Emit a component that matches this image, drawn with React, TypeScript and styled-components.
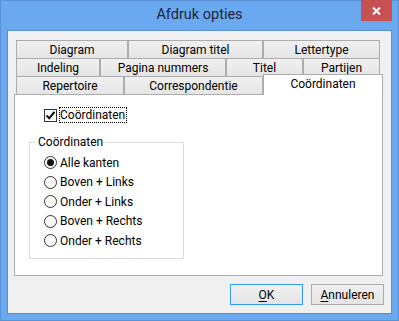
import React from 'react';
import styled, { createGlobalStyle } from 'styled-components';

const GlobalStyle = createGlobalStyle`
  html, body {
    margin: 0;
    padding: 0;
    background: #ffffff;
  }
  * {
    box-sizing: border-box;
  }
`;

const Window = styled.div`
  width: 399px;
  height: 321px;
  background: #6aa9ef;
  border: 1px solid #5b92d6;
  padding: 0 6px 6px 6px;
  display: flex;
  flex-direction: column;
  font-family: Roboto, "Liberation Sans", sans-serif;
  font-size: 12px;
  color: #000;
`;

const TitleBar = styled.div`
  height: 29px;
  display: grid;
  grid-template-columns: 1fr auto 1fr;
  align-items: start;
`;

const Title = styled.div`
  grid-column: 2;
  font-size: 14.5px;
  line-height: 28px;
  color: #22233a;
`;

const CloseButton = styled.div`
  grid-column: 3;
  justify-self: end;
  margin-top: -1px;
  width: 31px;
  height: 21px;
  background: #c75050;
  display: flex;
  align-items: center;
  justify-content: center;
`;

const Client = styled.div`
  flex: 1;
  background: #f0f0f0;
  border: 1px solid #5a8fcf;
  padding: 9px 7px 8px 6px;
  display: flex;
  flex-direction: column;
`;

const TabControl = styled.div`
  margin-right: 1px;
  display: flex;
  flex-direction: column;
`;

const TabRow = styled.div`
  display: flex;
  padding-left: 2px;
  height: 18px;
  position: relative;
`;

const Tab = styled.div<{ $w: number }>`
  width: ${(p) => p.$w}px;
  height: 18px;
  border: 1px solid #acacac;
  border-bottom: none;
  background: linear-gradient(#f0f0f0, #e5e5e5);
  display: flex;
  align-items: center;
  justify-content: center;
  line-height: 16px;
  white-space: nowrap;
`;

const ActiveTab = styled.div<{ $w: number }>`
  width: ${(p) => p.$w}px;
  height: 21px;
  margin-top: -2px;
  border: 1px solid #acacac;
  border-bottom: none;
  background: #ffffff;
  position: relative;
  z-index: 1;
  display: flex;
  justify-content: center;
  padding-top: 1px;
  line-height: 16px;
  white-space: nowrap;
`;

const Panel = styled.div`
  height: 182px;
  background: #ffffff;
  border: 1px solid #adadad;
  padding: 12px 0 0 14px;
  display: flex;
  flex-direction: column;
`;

const CheckRow = styled.div`
  display: flex;
  align-items: center;
  height: 16px;
  margin-left: 15px;
  gap: 2px;
`;

const CheckBox = styled.div`
  width: 13px;
  height: 13px;
  border: 1px solid #333333;
  background: #ffffff;
  display: flex;
  align-items: center;
  justify-content: center;
`;

const FocusLabel = styled.span`
  border: 1px dotted #000;
  padding: 0 1px 0 0;
  line-height: 14px;
  height: 16px;
`;

const GroupBox = styled.fieldset`
  margin: 11px 0 0 0;
  width: 155px;
  height: 125px;
  border: 1px solid #dcdcdc;
  padding: 3px 0 0 14px;
  min-width: 0;
`;

const Legend = styled.legend`
  margin-left: -8px;
  padding: 0 2px;
  line-height: 16px;
`;

const RadioRow = styled.div`
  display: flex;
  align-items: center;
  height: 19.5px;
  gap: 3px;
`;

const Radio = styled.div<{ $on?: boolean }>`
  width: 13px;
  height: 13px;
  border-radius: 50%;
  border: 1px solid #333333;
  background: #ffffff;
  display: flex;
  align-items: center;
  justify-content: center;

  &::after {
    content: '';
    display: ${(p) => (p.$on ? 'block' : 'none')};
    width: 7px;
    height: 7px;
    border-radius: 50%;
    background: #111111;
  }
`;

const Footer = styled.div`
  margin-top: 8px;
  display: flex;
  justify-content: flex-end;
  gap: 8px;
`;

const Button = styled.div<{ $default?: boolean }>`
  width: 73px;
  height: 21px;
  border: 1px solid ${(p) => (p.$default ? '#3399ff' : '#acacac')};
  background: linear-gradient(#f0f0f0, #e5e5e5);
  display: flex;
  align-items: center;
  justify-content: center;
  line-height: 16px;

  u {
    text-decoration: underline;
    text-underline-offset: 2px;
  }
`;

const radios = ['Alle kanten', 'Boven + Links', 'Onder + Links', 'Boven + Rechts', 'Onder + Rechts'];

export default function App() {
  return (
    <>
      <GlobalStyle />
      <Window>
        <TitleBar>
          <Title>Afdruk opties</Title>
          <CloseButton>
            <svg width="9" height="8" viewBox="0 0 9 8">
              <path d="M1 0.5 L8 7.5 M8 0.5 L1 7.5" stroke="#fff" strokeWidth="2" />
            </svg>
          </CloseButton>
        </TitleBar>
        <Client>
          <TabControl>
            <TabRow>
              <Tab $w={112}>Diagram</Tab>
              <Tab $w={135}>Diagram titel</Tab>
              <Tab $w={117}>Lettertype</Tab>
            </TabRow>
            <TabRow>
              <Tab $w={84}>Indeling</Tab>
              <Tab $w={126}>Pagina nummers</Tab>
              <Tab $w={77}>Titel</Tab>
              <Tab $w={77}>Partijen</Tab>
            </TabRow>
            <TabRow>
              <Tab $w={108}>Repertoire</Tab>
              <Tab $w={139}>Correspondentie</Tab>
              <ActiveTab $w={120}>Coördinaten</ActiveTab>
            </TabRow>
            <Panel>
              <CheckRow>
                <CheckBox>
                  <svg width="11" height="11" viewBox="0 0 11 11">
                    <path d="M1.5 5.5 L4.2 8.3 L9.5 1.8" fill="none" stroke="#000" strokeWidth="2" />
                  </svg>
                </CheckBox>
                <FocusLabel>Coördinaten</FocusLabel>
              </CheckRow>
              <GroupBox>
                <Legend>Coördinaten</Legend>
                {radios.map((r, i) => (
                  <RadioRow key={r}>
                    <Radio $on={i === 0} />
                    <span>{r}</span>
                  </RadioRow>
                ))}
              </GroupBox>
            </Panel>
          </TabControl>
          <Footer>
            <Button $default>
              <span><u>O</u>K</span>
            </Button>
            <Button>
              <span><u>A</u>nnuleren</span>
            </Button>
          </Footer>
        </Client>
      </Window>
    </>
  );
}
